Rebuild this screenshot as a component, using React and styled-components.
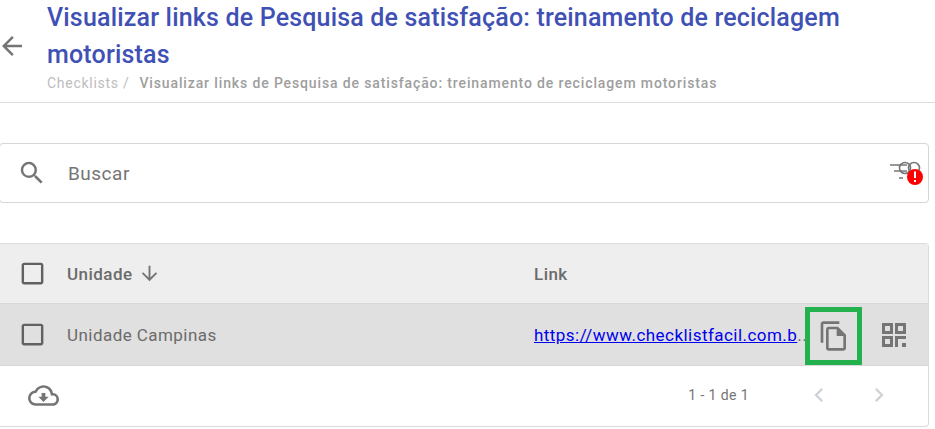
import React from 'react'
import styled, { createGlobalStyle } from 'styled-components'
import {
  MdArrowBack,
  MdSearch,
  MdArrowDownward,
  MdOutlineFileCopy,
  MdOutlineCloudDownload,
  MdChevronLeft,
  MdChevronRight,
  MdCheckBoxOutlineBlank,
} from 'react-icons/md'

const GlobalStyle = createGlobalStyle`
  html, body {
    margin: 0;
    background: #fff;
    overflow: hidden;
    font-family: Roboto, "Liberation Sans", sans-serif;
  }
`

const Page = styled.div`
  width: 935px;
  height: 429px;
  overflow: hidden;
`

const Header = styled.header`
  display: flex;
  align-items: center;
  height: 102px;
  border-bottom: 1px solid #ddd;
`

const BackButton = styled.div`
  display: flex;
  width: 50px;
  margin-left: -3px;
  padding-bottom: 11px;
  color: #757575;
  font-size: 30px;
`

const TitleBlock = styled.div`
  width: 810px;
  padding-bottom: 11px;
`

const Title = styled.h1`
  margin: 0;
  color: #3f51b5;
  font-size: 25px;
  font-weight: 500;
  line-height: 37px;
  letter-spacing: 0.18px;
`

const Breadcrumb = styled.div`
  display: flex;
  gap: 10px;
  color: #bdbdbd;
  font-size: 14px;
  line-height: 20px;
  letter-spacing: 0.72px;
`

const CurrentCrumb = styled.span`
  color: #9e9e9e;
  font-weight: 500;
  letter-spacing: 0.87px;
`

const SearchCard = styled.div`
  display: flex;
  align-items: center;
  width: 928px;
  height: 58px;
  margin: 40px 0 0 -1px;
  border: 1px solid #d6d6d6;
  border-radius: 4px;
`

const SearchIcon = styled.div`
  display: flex;
  margin-left: 17px;
  color: #757575;
  font-size: 30px;
`

const SearchText = styled.div`
  flex: 1;
  margin-left: 21px;
  color: #757575;
  font-size: 19px;
  letter-spacing: 0.5px;
`

const FilterIcon = styled.svg`
  display: block;
  margin-right: 4px;
`

const Table = styled.div`
  width: 928px;
  margin: 40px 0 0 0;
  border: 1px solid #dcdcdc;
  border-left: 0;
  border-radius: 0 4px 4px 0;
`

const Row = styled.div`
  display: grid;
  grid-template-columns: 67px 467px 394px;
  align-items: center;
  height: ${p => p.$height}px;
  background: ${p => p.$bg};
  border-bottom: 1px solid #d8d8d8;
  color: #6b6b6b;
  font-size: 17px;
  letter-spacing: 0.45px;
`

const CheckCell = styled.div`
  display: flex;
  padding-left: 18px;
  color: #616161;
  font-size: 29px;
`

const HeaderCell = styled.div`
  display: flex;
  align-items: center;
  gap: 5px;
  font-weight: 500;
`

const SortIcon = styled.span`
  display: flex;
  color: #757575;
  font-size: 23px;
`

const LinkCell = styled.div`
  display: flex;
  align-items: center;
  height: 100%;
`

const UrlBox = styled.div`
  width: 272px;
  white-space: nowrap;
  letter-spacing: 0.46px;
`

const UrlLink = styled.a`
  color: #0000ee;
  text-decoration: underline;
`

const CopyButton = styled.div`
  display: flex;
  align-items: center;
  justify-content: center;
  box-sizing: border-box;
  width: 57px;
  height: 58px;
  margin: 3px 0 0 -1px;
  border: 5px solid #22b14c;
  color: #757575;
  font-size: 32px;
`

const QrIcon = styled.svg`
  display: block;
  margin-left: 20px;
  fill: #757575;
`

const Footer = styled.div`
  display: flex;
  align-items: center;
  height: 58px;
  padding: 0 0 2px 28px;
`

const CloudIcon = styled.div`
  display: flex;
  color: #757575;
  font-size: 31px;
`

const Pagination = styled.div`
  display: flex;
  align-items: center;
  margin-left: auto;
  color: #757575;
  font-size: 14px;
  letter-spacing: 0.4px;
`

const PageText = styled.span`
  margin-right: 56px;
`

const PageArrow = styled.span`
  display: flex;
  margin-right: ${p => p.$gap}px;
  color: #cfd3d8;
  font-size: 28px;
`

const FilterGlyph = () => (
  <FilterIcon width="36" height="30" viewBox="0 0 36 30">
    <g fill="none" stroke="#757575" strokeWidth="1.6">
      <path d="M2 7h17M6 13h13M11 20h4" />
      <circle cx="17" cy="10" r="5.5" />
      <circle cx="26" cy="10" r="5.5" />
    </g>
    <circle cx="27" cy="19" r="8" fill="#ff0000" />
    <path d="M27 13.5v6.5M27 22v2" stroke="#fff" strokeWidth="2" />
  </FilterIcon>
)

const QrGlyph = () => (
  <QrIcon width="24" height="24" viewBox="0 0 24 24">
    <path fillRule="evenodd" d="M0 0h11v11H0zM3 3v5h5V3zM13 0h11v11H13zM16 3v5h5V3zM0 13h11v11H0zM3 16v5h5v-5z" />
    <path d="M13 13h11v3h-8v8h-3zM20 20h4v4h-4z" />
  </QrIcon>
)

export default function App() {
  return (
    <Page>
      <GlobalStyle />
      <Header>
        <BackButton><MdArrowBack /></BackButton>
        <TitleBlock>
          <Title>Visualizar links de Pesquisa de satisfação: treinamento de reciclagem motoristas</Title>
          <Breadcrumb>
            <span>Checklists /</span>
            <CurrentCrumb>Visualizar links de Pesquisa de satisfação: treinamento de reciclagem motoristas</CurrentCrumb>
          </Breadcrumb>
        </TitleBlock>
      </Header>

      <SearchCard>
        <SearchIcon><MdSearch /></SearchIcon>
        <SearchText>Buscar</SearchText>
        <FilterGlyph />
      </SearchCard>

      <Table>
        <Row $height={59} $bg="#eeeeee">
          <CheckCell><MdCheckBoxOutlineBlank /></CheckCell>
          <HeaderCell>
            Unidade
            <SortIcon><MdArrowDownward /></SortIcon>
          </HeaderCell>
          <HeaderCell>Link</HeaderCell>
        </Row>
        <Row $height={61} $bg="#e0e0e0">
          <CheckCell><MdCheckBoxOutlineBlank /></CheckCell>
          <div>Unidade Campinas</div>
          <LinkCell>
            <UrlBox><UrlLink>https://www.checklistfacil.com.b</UrlLink>..</UrlBox>
            <CopyButton><MdOutlineFileCopy /></CopyButton>
            <QrGlyph />
          </LinkCell>
        </Row>
        <Footer>
          <CloudIcon><MdOutlineCloudDownload /></CloudIcon>
          <Pagination>
            <PageText>1 - 1 de 1</PageText>
            <PageArrow $gap={32}><MdChevronLeft /></PageArrow>
            <PageArrow $gap={35}><MdChevronRight /></PageArrow>
          </Pagination>
        </Footer>
      </Table>
    </Page>
  )
}
